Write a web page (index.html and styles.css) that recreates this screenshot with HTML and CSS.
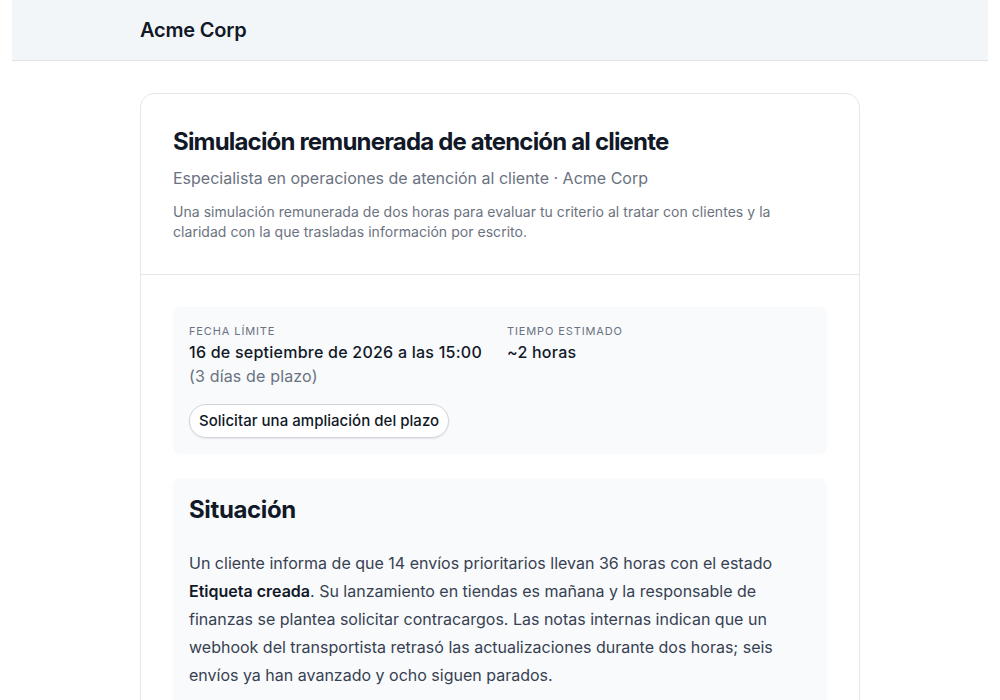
FILE: index.html
```html
<!DOCTYPE html>
<html lang="es">
<head>
<meta charset="utf-8">
<title>Acme Corp</title>
<link rel="stylesheet" href="styles.css">
</head>
<body>
<div class="page">
  <header class="topbar">
    <div class="topbar-inner">Acme Corp</div>
  </header>
  <main class="main">
    <article class="card">
      <section class="card-head">
        <h1 class="title">Simulación remunerada de atención al cliente</h1>
        <p class="subtitle">Especialista en operaciones de atención al cliente · Acme Corp</p>
        <p class="desc">Una simulación remunerada de dos horas para evaluar tu criterio al tratar con clientes y la claridad con la que trasladas información por escrito.</p>
      </section>
      <section class="card-body">
        <div class="meta">
          <div class="meta-row">
            <div class="meta-item">
              <div class="label">Fecha límite</div>
              <div class="value">16 de septiembre de 2026 a las 15:00</div>
              <div class="note">(3 días de plazo)</div>
            </div>
            <div class="meta-item">
              <div class="label">Tiempo estimado</div>
              <div class="value">~2 horas</div>
            </div>
          </div>
          <button class="pill">Solicitar una ampliación del plazo</button>
        </div>
        <div class="panel">
          <h2 class="panel-title">Situación</h2>
          <p class="panel-text">Un cliente informa de que 14 envíos prioritarios llevan 36 horas con el estado <strong>Etiqueta creada</strong>. Su lanzamiento en tiendas es mañana y la responsable de finanzas se plantea solicitar contracargos. Las notas internas indican que un webhook del transportista retrasó las actualizaciones durante dos horas; seis envíos ya han avanzado y ocho siguen parados.</p>
        </div>
      </section>
    </article>
  </main>
</div>
</body>
</html>
```

FILE: styles.css
```css
* { box-sizing: border-box; }
html, body { margin: 0; padding: 0; background: #ffffff; }
body {
  font-family: Inter, "Noto Sans", "Liberation Sans", sans-serif;
  color: #111827;
}
.page { padding: 0 12px; }
.topbar {
  background: #f3f6f8;
  border-bottom: 1px solid #dfe3e8;
  height: 61px;
  display: flex;
  align-items: center;
}
.topbar-inner {
  width: 720px;
  margin: 0 auto;
  font-size: 20px;
  font-weight: 600;
  letter-spacing: -0.01em;
  color: #111827;
}
.main { padding-top: 32px; }
.card {
  width: 720px;
  margin: 0 auto;
  border: 1px solid #e5e7eb;
  border-radius: 14px;
  background: #fff;
}
.card-head {
  padding: 32px 32px 32px;
  border-bottom: 1px solid #e5e7eb;
}
.title {
  margin: 0;
  font-size: 24px;
  line-height: 32px;
  font-weight: 700;
  letter-spacing: -0.034em;
  color: #111827;
}
.subtitle {
  margin: 8px 0 0;
  font-size: 16px;
  line-height: 24px;
  color: #6b7280;
}
.desc {
  margin: 12px 0 0;
  max-width: 630px;
  font-size: 14px;
  line-height: 20px;
  letter-spacing: 0.003em;
  color: #6b7280;
}
.card-body {
  padding: 32px 32px;
  display: flex;
  flex-direction: column;
  gap: 24px;
}
.meta {
  background: #f8fafc;
  border-radius: 8px;
  padding: 16px;
}
.meta-row { display: flex; gap: 25px; }
.label {
  font-size: 11px;
  line-height: 16px;
  letter-spacing: 0.08em;
  text-transform: uppercase;
  color: #6b7280;
}
.value {
  margin-top: 1px;
  font-size: 16px;
  line-height: 24px;
  font-weight: 500;
  letter-spacing: 0.015em;
  color: #111827;
}
.note {
  font-size: 16px;
  line-height: 24px;
  letter-spacing: 0.01em;
  color: #6b7280;
}
.pill {
  margin-top: 16px;
  font-family: inherit;
  font-size: 15px;
  line-height: 20px;
  font-weight: 500;
  letter-spacing: 0.002em;
  color: #111827;
  background: #fff;
  border: 1px solid #d1d5db;
  border-radius: 999px;
  padding: 6px 9px;
  box-shadow: 0 1px 2px rgba(0,0,0,0.08);
}
.panel {
  background: #f8fafc;
  border-radius: 8px;
  padding: 16px 16px;
}
.panel-title {
  margin: 0;
  font-size: 24px;
  line-height: 32px;
  font-weight: 700;
  letter-spacing: -0.015em;
  color: #111827;
}
.panel-text {
  margin: 23px 0 0;
  font-size: 16px;
  line-height: 28px;
  color: #374151;
}
.panel-text strong { font-weight: 600; color: #111827; }
```
